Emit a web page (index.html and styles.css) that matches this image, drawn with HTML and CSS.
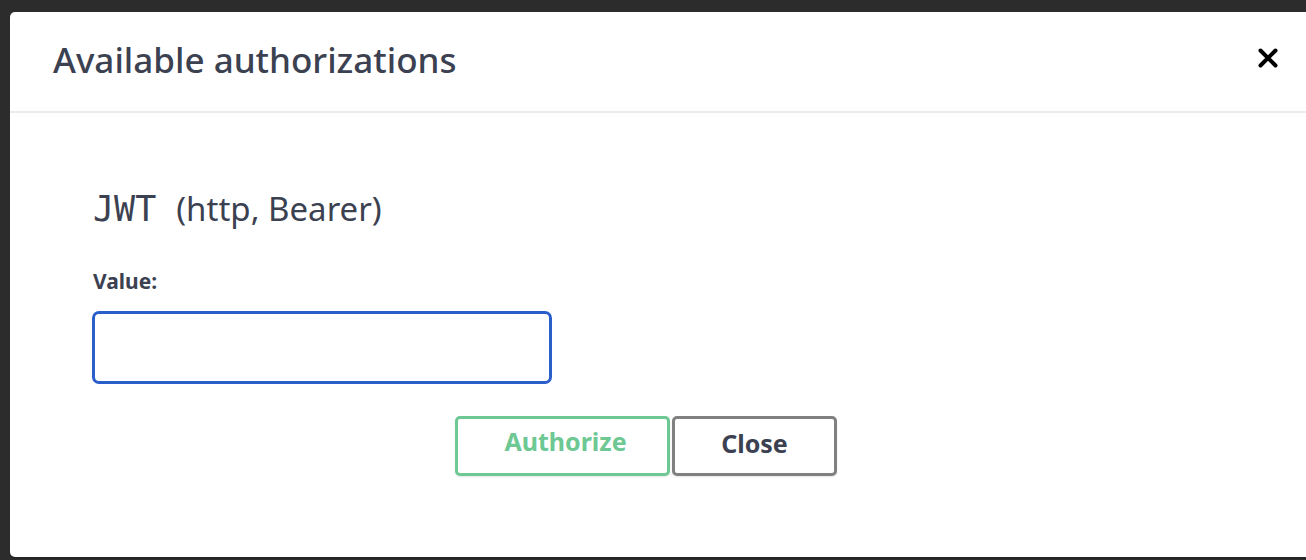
FILE: index.html
```html
<!DOCTYPE html>
<html lang="en">
<head>
<meta charset="utf-8">
<title>Available authorizations</title>
<link rel="stylesheet" href="styles.css">
</head>
<body>
<div class="backdrop">
  <div class="modal">
    <div class="modal-header">
      <h3 class="modal-title">Available authorizations</h3>
      <button class="close-x" aria-label="Close">
        <svg width="20" height="20" viewBox="0 0 20 20"><path d="M2.5 2.5 L17.5 17.5 M17.5 2.5 L2.5 17.5" stroke="#000" stroke-width="4" stroke-linecap="round"/></svg>
      </button>
    </div>
    <div class="modal-body">
      <h4 class="scheme"><code class="scheme-name">JWT</code><span class="scheme-type">(http, Bearer)</span></h4>
      <label class="field-label">Value:</label>
      <input class="field-input" type="text">
      <div class="btn-row">
        <button class="btn btn-authorize">Authorize</button>
        <button class="btn btn-close">Close</button>
      </div>
    </div>
  </div>
</div>
</body>
</html>
```
FILE: styles.css
```css
* { box-sizing: border-box; }
html, body {
  margin: 0;
  height: 100%;
  overflow: hidden;
}
body {
  background: #2c2c2c;
  font-family: "Noto Sans", "Open Sans", sans-serif;
  color: #3b4151;
}
.backdrop {
  padding: 12px 0 0 10px;
}
.modal {
  width: 1320px;
  height: 545px;
  background: #fff;
  border-radius: 5px;
  box-shadow: 0 2px 1px rgba(0,0,0,0.12);
}
.modal-header {
  height: 101px;
  border-bottom: 2px solid #ebebeb;
  display: flex;
  align-items: center;
  padding: 0 0 4px 43px;
}
.modal-title {
  margin: 0;
  font-size: 35px;
  font-weight: 500;
  color: #3b4151;
  flex: 1;
}
.close-x {
  border: 0;
  background: none;
  padding: 0;
  margin-right: 52px;
  width: 20px;
  height: 20px;
  display: flex;
  margin-top: -4px;
}
.modal-body {
  padding: 76px 0 0 83px;
  display: flex;
  flex-direction: column;
  align-items: flex-start;
}
.scheme {
  margin: 0;
  font-weight: 400;
  font-size: 33px;
  display: flex;
  align-items: baseline;
  gap: 20px;
  line-height: 40px;
}
.scheme-name {
  font-family: "DejaVu Sans Mono", "Liberation Mono", monospace;
  font-size: 35px;
  color: #3b4151;
}
.field-label {
  margin-top: 38px;
  font-weight: 700;
  font-size: 21px;
  line-height: 28px;
}
.field-input {
  margin-top: 16px;
  margin-left: -1px;
  width: 460px;
  height: 73px;
  border: 3px solid #2a5ecb;
  border-radius: 7px;
  outline: none;
  font: inherit;
}
.btn-row {
  margin-top: 32px;
  margin-left: 362px;
  display: flex;
  gap: 2px;
}
.btn {
  height: 60px;
  border-radius: 5px;
  background: #fff;
  font-family: inherit;
  font-weight: 700;
  font-size: 25px;
  box-shadow: 0 1px 2px rgba(0,0,0,0.1);
  padding: 0;
}
.btn-authorize {
  width: 215px;
  border: 3px solid #6dc893;
  color: #6dc893;
  padding: 0 0 10px 6px;
}
.btn-close {
  width: 165px;
  border: 3px solid #808080;
  color: #3b4151;
  padding-bottom: 6px;
}
```
